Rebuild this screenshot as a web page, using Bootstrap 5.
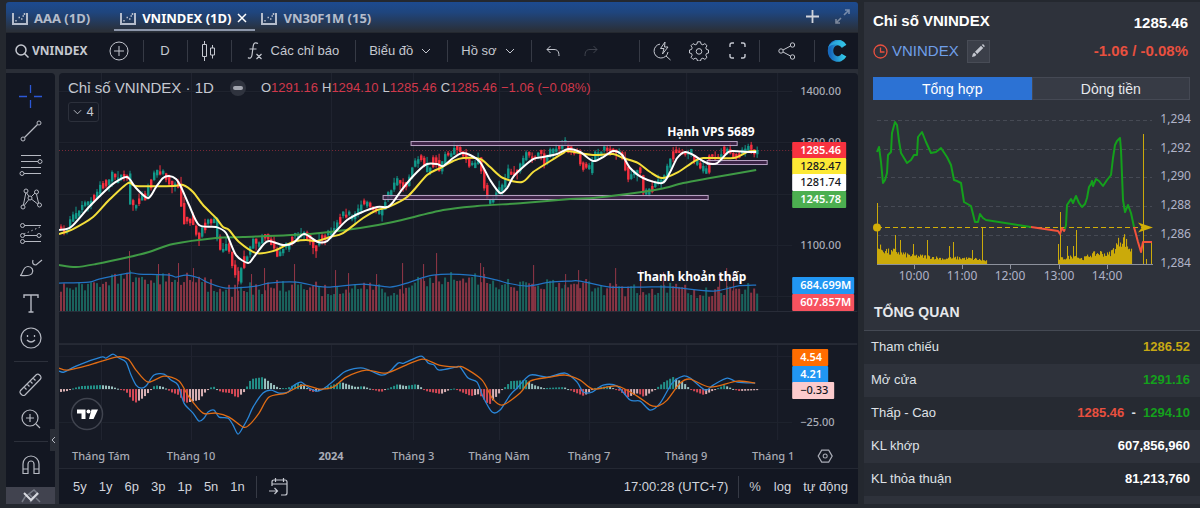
<!DOCTYPE html>
<html lang="vi" data-bs-theme="dark">
<head>
<meta charset="utf-8">
<meta name="viewport" content="width=device-width, initial-scale=1">
<title>VNINDEX (1D)</title>
<link href="https://cdn.jsdelivr.net/npm/bootstrap@5.3.0/dist/css/bootstrap.min.css" rel="stylesheet">
<style>
  body { background: #24282f; color: #d1d4dc; font-family: "Liberation Sans", Arial, sans-serif; font-size: 13px; line-height: 18px; }
  button { font: inherit; color: inherit; background: none; border: 0; padding: 0; }
  a { color: inherit; text-decoration: none; }
  svg.ico { fill: none; stroke: currentColor; stroke-width: 1; flex: none; display: block; }
  .humanist { font-family: "Noto Sans", "Open Sans", sans-serif; }
  .workspace { min-width: 0; padding-left: 6px; }
  .tabbar { height: 30px; margin-top: 2px; background: linear-gradient(#1d4b90, #1f457d 35%, #2a303a 95%); border-radius: 3px 3px 0 0; }
  .doc-tab { height: 29px; color: #b4bccb; font-weight: 700; font-size: 13px; gap: 6px; padding: 5px 8px 0 6px; border-bottom: 2px solid transparent; }
  .doc-tab.active { color: #fff; border-color: #8d97ab; }
  .doc-tab.active svg:first-child { color: #b4bccb; }
  .toolbar { height: 36px; background: #131722; margin-top: 1px; }
  .tool-cell { height: 22px; color: #c5c8d0; }
  .menu-cell { gap: 8px; padding: 0 16px 0 13px; }
  .symbol-cell { font-size: 12px; font-weight: 700; gap: 3px; padding: 0 11px 0 9px; }
  .ruled { border-left: 1px solid #363a45; }
  .w-44 { width: 44px; } .w-36 { width: 36px; } .w-32 { width: 32px; }
  .frame { background: #2a2e37; min-height: 0; margin-bottom: 4px; }
  .sidebar { width: 49px; background: #131722; border-radius: 0 4px 0 0; color: #b6b9c2; padding-top: 7px; }
  .sidebar button { height: 34px; width: 100%; }
  .sidebar .tall button { height: 35px; }
  .sidebar hr { width: 34px; margin: 5px auto 6px; border-color: #787b86; }
  .more { left: 0; right: 0; bottom: 0; background: #41434f; height: 17px !important; color: #d8dae0; }
  .collapse-tab { right: -1px; bottom: 53px; width: 6px !important; height: 22px !important; background: #2a2e37; }
  .chart-panel { background: #161a25; border-radius: 4px 4px 0 0; min-width: 0; }
  .legend { left: 9px; top: 5px; color: #c5c8d0; line-height: 20px; }
  .legend-row { height: 20px; }
  .ohlc { gap: 4px; }
  .symbol-name { font-size: 15px; }
  .down { color: #d0384b; }
  .hide-dot { width: 16px; height: 16px; border-radius: 50%; background: #2f333e; margin: 0 15px 0 16px; }
  .hide-dot::after { content: ""; width: 10px; height: 4px; border-radius: 2px; background: #a3a6af; }
  .count-btn { height: 20px; width: 31px; border: 1px solid #2c303b; border-radius: 3px; margin-top: 4px; }
  .range-bar { height: 36px; border-top: 1px solid #242833; background: #131722; padding: 0 10px 0 14px; }
  .ranges { gap: 12px; }
  .side-panel { width: 28%; background: #2e323b; margin: 2px 0 4px 6px; }
  .quote { font-size: 15px; padding: 9px 12px 0 9px; color: #fff; }
  .quote-row { height: 20px; }
  .quote-row.tight { height: 24px; margin-top: 8px; }
  .ticker { color: #6f9fe8; }
  .neg { color: #e8503f; }
  .edit-btn { width: 23px; height: 23px; background: #3b3f49; border: 1px solid #484c56; color: #c5c8d0; }
  .switch { padding: 14px 10px 0 9px; font-size: 14px; color: #e6e8ec; }
  .switch button { height: 23px; background: #373b45; border: 1px solid #454954; }
  .switch .active { background: #2c72d4; border-color: #2c72d4; color: #fff; }
  .overview h2 { font-size: 14px; font-weight: 700; color: #e6e8ec; margin: 0; padding: 14px 10px 9px; line-height: 18px; border-bottom: 1px solid #444953; }
  .overview table { font-size: 13px; line-height: 18px; color: #dfe1e6; }
  .overview th { font-weight: 400; height: 33px; padding: 0 7px 1px; }
  .overview td { font-weight: 700; text-align: right; padding: 0 10px 1px; }
  .overview tr:nth-child(odd) { background: #262a32; }
  .ref { color: #c7a814; } .pos { color: #14a01c; }
  .plot text { font-family: "Noto Sans", "Open Sans", sans-serif; font-size: 11px; fill: #a9acb6; font-weight: 500; }
  .plot .note { font-size: 12px; font-weight: 700; fill: #fff; }
  .plot .on { fill: #fff; font-weight: 600; }
  .plot .ink { fill: #131722; }
  .intraday text { font-family: "Noto Sans", "Open Sans", sans-serif; font-size: 12px; fill: #b0b3c8; }
</style>
</head>
<body class="vh-100 overflow-hidden">
<svg class="d-none">
  <symbol id="i-doc" viewBox="0 0 16 13"><path d="M1 1v11h14V1" stroke-width="2"/><path d="M4 9.500V8M6.500 5.500h1.500M9 7h1.500M10.500 4H12M12.500 1v2" stroke-width="1.500"/></symbol>
  <symbol id="i-chev" viewBox="0 0 10 6"><path d="M1 1l4 4 4-4"/></symbol>
</svg>
<div class="d-flex h-100">
  <main class="workspace d-flex flex-column flex-grow-1">
    <nav class="tabbar d-flex humanist">
      <button class="doc-tab d-flex align-items-center me-3"><svg class="ico" width="16" height="13"><use href="#i-doc"/></svg>AAA (1D)</button>
      <button class="doc-tab active d-flex align-items-center"><svg class="ico" width="16" height="13"><use href="#i-doc"/></svg>VNINDEX (1D)
        <svg class="ico" width="10" height="10" viewBox="0 0 10 10"><path d="M1 1l8 8M9 1L1 9" stroke-width="1.500"/></svg></button>
      <button class="doc-tab d-flex align-items-center"><svg class="ico" width="16" height="13"><use href="#i-doc"/></svg>VN30F1M (15)</button>
      <button class="ms-auto px-3" aria-label="Thêm"><svg class="ico" width="13" height="13" viewBox="0 0 13 13"><path d="M6.500 0v13M0 6.500h13" stroke-width="1.800"/></svg></button>
      <button class="pe-2" aria-label="Mở rộng"><svg class="ico opacity-50" width="15" height="15" viewBox="0 0 15 15"><path d="M9 6l5-5M10 1h4v4M6 9l-5 5M1 10v4h4" stroke-width="1.600"/></svg></button>
    </nav>

    <div class="toolbar d-flex align-items-center">
      <button class="tool-cell symbol-cell d-flex align-items-center humanist">
        <svg class="ico" width="14" height="14" viewBox="0 0 14 14"><circle cx="6" cy="6" r="5" stroke-width="1.500"/><path d="M9.500 9.500l4 4" stroke-width="1.500"/></svg>VNINDEX</button>
      <button class="tool-cell w-44 pe-1 d-flex align-items-center justify-content-center" aria-label="So sánh"><svg class="ico" width="20" height="20" viewBox="0 0 20 20"><circle cx="10" cy="10" r="9"/><path d="M10 5v10M5 10h10"/></svg></button>
      <button class="tool-cell ruled w-44">D</button>
      <button class="tool-cell ruled w-44 d-flex align-items-center justify-content-center" aria-label="Nến"><svg class="ico" width="16" height="20" viewBox="0 0 16 20"><path d="M1.500 3.500h4v12h-4zM3.500 0v3.500M3.500 15.500V20M9.500 7h4v7h-4zM11.500 4v3M11.500 14v3.500"/></svg></button>
      <button class="tool-cell ruled d-flex align-items-center" style="gap:7px;padding:0 16px 0 15px">
        <svg class="ico" width="17" height="20" viewBox="0 0 17 20"><path d="M11 2.500C8.500 1 6.500 2 6.200 5L5 14c-.3 3-2.500 4-4 2.500M2.500 8h7M9.500 13l5 5M14.500 13l-5 5" stroke-width="1.200"/></svg>Các chỉ báo</button>
      <button class="tool-cell menu-cell ruled d-flex align-items-center">Biểu đồ<svg class="ico" width="10" height="6"><use href="#i-chev"/></svg></button>
      <button class="tool-cell menu-cell ruled d-flex align-items-center">Hồ sơ<svg class="ico" width="10" height="6"><use href="#i-chev"/></svg></button>
      <button class="tool-cell ruled w-44 d-flex align-items-center justify-content-center" aria-label="Hoàn tác"><svg class="ico" width="14" height="12" viewBox="0 0 14 12"><path d="M4.500 1L1 4.500 4.500 8M1 4.500h7c3.500 0 5 2 5 6.500"/></svg></button>
      <button class="tool-cell w-32 opacity-25 d-flex align-items-center justify-content-center" aria-label="Làm lại"><svg class="ico" width="14" height="12" viewBox="0 0 14 12"><path d="M9.500 1L13 4.500 9.500 8M13 4.500H6C2.500 4.500 1 6.500 1 11"/></svg></button>
      <button class="tool-cell ruled w-44 ms-auto d-flex align-items-center justify-content-center" aria-label="Tìm nhanh"><svg class="ico" width="20" height="20" viewBox="0 0 20 20"><path d="M8 3.100A7 7 0 1 0 16 11M14 15l4.500 4"/><path d="M13 1L8.500 7.500H12L10.500 13 16 6h-3.500z"/></svg></button>
      <button class="tool-cell w-32 d-flex align-items-center justify-content-center" aria-label="Cài đặt"><svg class="ico" width="20" height="20" viewBox="0 0 20 20"><path d="M8.500.8h3l.6 2.300 1.700.7 2.100-1.200 2.100 2.100-1.200 2.100.7 1.700 2 .5v3l-2 .5-.7 1.700 1.200 2.100-2.100 2.100-2.100-1.200-1.700.7-.6 2.100h-3l-.6-2.100-1.700-.7-2.100 1.200L2 16.300l1.200-2.100-.7-1.700L.5 12V9l2-.5.7-1.700L2 4.700l2.100-2.100 2.100 1.200 1.700-.7z"/><circle cx="10" cy="10.400" r="2.800"/></svg></button>
      <button class="tool-cell w-44 d-flex align-items-center justify-content-center" aria-label="Toàn màn hình"><svg class="ico" width="17" height="17" viewBox="0 0 17 17"><path d="M1 5V3q0-2 2-2h2M12 1h2q2 0 2 2v2M16 12v2q0 2-2 2h-2M5 16H3q-2 0-2-2v-2" stroke-width="1.400"/></svg></button>
      <button class="tool-cell ruled d-flex align-items-center justify-content-center" style="width:55px" aria-label="Chia sẻ"><svg class="ico" width="18" height="18" viewBox="0 0 18 18"><circle cx="3" cy="9" r="2.200"/><circle cx="14.500" cy="3" r="2.200"/><circle cx="14.500" cy="15" r="2.200"/><path d="M5 8l7.500-4M5 10l7.500 4"/></svg></button>
      <a href="#" class="tool-cell ruled w-44 d-flex align-items-center justify-content-center" aria-label="Trang chủ"><svg width="20" height="22" viewBox="0 0 20 22"><defs><linearGradient id="cg" x2="1" y2="0"><stop stop-color="#1769bd"/><stop offset="1" stop-color="#31c6e8"/></linearGradient></defs><path d="M17 6.500C13-.5 3.500 3 3.500 11S13 22.500 17 15.500" fill="none" stroke="url(#cg)" stroke-width="5.500" transform="translate(0 -.3)"/><path d="M1 8C3 1 14-2 19 5l-4 3C12 4 5 3 1 8z" fill="#36bfe6" opacity=".6"/></svg></a>
    </div>

    <div class="frame d-flex flex-grow-1 pt-1">
      <aside class="sidebar position-relative me-1 flex-shrink-0">
        <button class="d-flex align-items-center justify-content-center" style="color:#2c58d6" aria-label="Con trỏ"><svg class="ico" width="23" height="23" viewBox="0 0 23 23"><path d="M11.500 0v8M11.500 15v8M0 11.500h8M15 11.500h8" stroke-width="1.300"/></svg></button>
        <button class="d-flex align-items-center justify-content-center" aria-label="Đường xu hướng"><svg class="ico" width="22" height="22" viewBox="0 0 22 22"><circle cx="3" cy="19" r="2"/><circle cx="19" cy="3" r="2"/><path d="M4.500 17.500l13-13" stroke-width="1.200"/></svg></button>
        <button class="d-flex align-items-center justify-content-center" aria-label="Fibonacci"><svg class="ico" width="24" height="22" viewBox="0 0 24 22"><path d="M2 1.500h20M2 7.500h18M2 13.500h20M4 19.500h18" stroke-width="1.200"/><circle cx="21" cy="7.500" r="2" fill="#131722"/><circle cx="3" cy="19.500" r="2" fill="#131722"/></svg></button>
        <button class="d-flex align-items-center justify-content-center" aria-label="Mẫu hình"><svg class="ico" width="22" height="22" viewBox="0 0 22 22"><path d="M3 19L6 4l4 6 6-6 3 13-9-7z"/><g fill="#131722"><circle cx="3" cy="19" r="2"/><circle cx="6" cy="3" r="2"/><circle cx="10" cy="10" r="2"/><circle cx="16.500" cy="4" r="2"/><circle cx="19.500" cy="17" r="2"/></g></svg></button>
        <div class="tall">
        <button class="d-flex align-items-center justify-content-center" aria-label="Dự báo"><svg class="ico" width="22" height="22" viewBox="0 0 22 22"><path d="M4 3.500h17M4 13.500h13M4 19.500h17" stroke-width="1.200"/><path d="M4 12L20 5" stroke-dasharray="1.500 2.500"/><g fill="#131722"><circle cx="2.500" cy="3.500" r="2"/><circle cx="2.500" cy="13.500" r="2"/><circle cx="2.500" cy="19.500" r="2"/><circle cx="19" cy="13.500" r="2"/></g></svg></button>
        <button class="d-flex align-items-center justify-content-center" aria-label="Cọ vẽ"><svg class="ico" width="24" height="18" viewBox="0 0 24 18"><path d="M1 16.500c3 0 2-9 8-9 4 0 6 4 4 7s-8 2-12 2zM14 1c-1 3 0 5 3 5l6-5" stroke-width="1.200"/></svg></button>
        <button class="d-flex align-items-center justify-content-center" aria-label="Văn bản"><svg class="ico" width="16" height="19" viewBox="0 0 16 19"><path d="M1 4V1h14v3M8 1v17M5.500 18h5" stroke-width="1.400"/></svg></button>
        <button class="d-flex align-items-center justify-content-center" aria-label="Biểu tượng"><svg class="ico" width="22" height="22" viewBox="0 0 22 22"><circle cx="11" cy="11" r="10" stroke-width="1.200"/><path d="M7 13q4 4 8 0M7.500 8v2M14.500 8v2" stroke-width="1.300"/></svg></button>
        </div>
        <hr>
        <button class="d-flex align-items-center justify-content-center" aria-label="Thước đo"><svg class="ico" width="24" height="24" viewBox="0 0 24 24"><path d="M1.500 17.500L17.500 1.500q1.500-1 3 .5l1 1q1 1.500 0 3L6 22q-1.500 1-3 0l-1.500-1.500q-1-1.500 0-3zM5 14l2.500 2.500M8 11l2.500 2.500M11 8l2.500 2.500M14 5l2.500 2.500" stroke-width="1.200"/></svg></button>
        <button class="d-flex align-items-center justify-content-center" aria-label="Phóng to"><svg class="ico" width="20" height="20" viewBox="0 0 20 20"><circle cx="9" cy="9" r="8" stroke-width="1.200"/><path d="M9 5v8M5 9h8M15 15l4 4" stroke-width="1.200"/></svg></button>
        <hr>
        <button class="d-flex align-items-center justify-content-center" aria-label="Nam châm"><svg class="ico" width="18" height="20" viewBox="0 0 18 20"><path d="M1 18.500V9a8 8 0 0 1 16 0v9.500h-5V9a3 3 0 0 0-6 0v9.500zM1 14h5M12 14h5" stroke-width="1.200"/></svg></button>
        <button class="more position-absolute d-flex align-items-center justify-content-center" aria-label="Xem thêm"><svg class="ico" width="20" height="15" viewBox="0 0 20 15"><path d="M1 14l3-5 9-7 4 4-8 8M8 6l4 4M15 10l4 4" stroke="#777b86" stroke-width="1.500"/><path d="M3 5l7 7 7-7" stroke-width="2"/></svg></button>
        <button class="collapse-tab position-absolute" aria-label="Thu gọn"><svg class="ico" width="6" height="8" viewBox="0 0 6 8"><path d="M5 1L2 4l3 3"/></svg></button>
      </aside>

      <section class="chart-panel position-relative flex-grow-1 d-flex flex-column">
        <div class="legend position-absolute">
          <div class="legend-row d-flex align-items-center">
            <span class="symbol-name">Chỉ số VNINDEX · 1D</span>
            <button class="hide-dot d-flex align-items-center justify-content-center" aria-label="Ẩn"></button>
            <div class="ohlc d-flex">
              <span>O<span class="down">1291.16</span></span>
              <span>H<span class="down">1294.10</span></span>
              <span>L<span class="down">1285.46</span></span>
              <span>C<span class="down">1285.46</span></span>
              <span class="down">−1.06 (−0.08%)</span>
            </div>
          </div>
          <button class="count-btn d-flex align-items-center justify-content-center gap-1"><svg class="ico" width="9" height="6"><use href="#i-chev"/></svg>4</button>
        </div>
        <div class="flex-grow-1" style="min-height:0">
          <svg class="plot d-block w-100 h-100" id="plot" viewBox="59 73 798 395" preserveAspectRatio="xMinYMin meet"></svg>
        </div>
        <div class="range-bar d-flex align-items-center">
          <div class="ranges d-flex">
            <button>5y</button><button>1y</button><button>6p</button><button>3p</button><button>1p</button><button>5n</button><button>1n</button>
          </div>
          <button class="ruled tool-cell ps-2 d-flex align-items-center" style="margin-left:11px" aria-label="Đến ngày"><svg class="ico ms-1" width="20" height="20" viewBox="0 0 20 20"><path d="M3 9V5q0-2 2-2h11q2 0 2 2v11q0 2-2 2h-4M3 7h15M6.500 1v4M14.500 1v4M0 14h8M5.500 11l3 3-3 3" stroke-width="1.200"/></svg></button>
          <button class="ms-auto">17:00:28 (UTC+7)</button>
          <button class="ruled tool-cell" style="margin-left:10px;padding-left:10px">%</button>
          <button style="margin-left:13px">log</button>
          <button style="margin-left:12px">tự động</button>
        </div>
      </section>
    </div>
  </main>

  <aside class="side-panel d-flex flex-column overflow-hidden flex-shrink-0">
    <div class="quote">
      <div class="quote-row d-flex justify-content-between fw-bold align-items-center"><span>Chỉ số VNINDEX</span><span class="pt-1">1285.46</span></div>
      <div class="quote-row tight d-flex align-items-center">
        <svg class="ico neg me-1" width="15" height="15" viewBox="0 0 15 15"><circle cx="7.500" cy="7.500" r="6.500" stroke-width="1.300"/><path d="M7.500 3.500V8h4" stroke-width="1.300"/></svg>
        <a href="#" class="ticker">VNINDEX</a>
        <button class="edit-btn ms-2 d-flex align-items-center justify-content-center" aria-label="Sửa"><svg width="14" height="14" viewBox="0 0 14 14" fill="currentColor"><path d="M1 13l.8-3 1.400-1.400 2.200 2.200L4 12.200zM4 7.800L10 1.800l2.200 2.200-6 6zM10.800 1l.6-.6q.6-.3 1.200.2l.8.8q.5.600.2 1.200l-.6.6z"/></svg></button>
        <span class="neg fw-bold ms-auto">-1.06 / -0.08%</span>
      </div>
    </div>
    <div class="switch d-flex"><button class="active w-50">Tổng hợp</button><button class="w-50">Dòng tiền</button></div>
    <svg class="intraday d-block w-100 flex-shrink-0" id="intraday" viewBox="864 100 336 189"></svg>
    <section class="overview">
      <h2>TỔNG QUAN</h2>
      <table class="w-100">
        <tr><th scope="row">Tham chiếu</th><td class="ref">1286.52</td></tr>
        <tr><th scope="row">Mở cửa</th><td class="pos">1291.16</td></tr>
        <tr><th scope="row">Thấp - Cao</th><td><span class="neg">1285.46</span> &nbsp;-&nbsp; <span class="pos">1294.10</span></td></tr>
        <tr><th scope="row">KL khớp</th><td class="text-white">607,856,960</td></tr>
        <tr><th scope="row">KL thỏa thuận</th><td class="text-white">81,213,760</td></tr>
        <tr><th scope="row">Tổng KL</th><td></td></tr>
      </table>
    </section>
  </aside>
</div>
<script src="https://cdn.jsdelivr.net/npm/bootstrap@5.3.0/dist/js/bootstrap.bundle.min.js"></script>
<script>
  let seed = 7;
  const rnd = () => (seed = (seed * 16807) % 2147483647) / 2147483647;
  const pts = s => s.trim().split(/\s+/).map(p => p.split(',').map(Number));
  const at = (a, x) => {
    for (let i = 1; i < a.length; i++) if (x <= a[i][0]) {
      const [x0, y0] = a[i - 1], [x1, y1] = a[i];
      return y0 + (y1 - y0) * Math.max(0, x - x0) / (x1 - x0);
    }
    return a[a.length - 1][1];
  };
  // Catmull-Rom curve through the points
  const curve = a => a.map((p, i) => {
    if (!i) return `M${p}`;
    const q = a[i - 1], o = a[i - 2] || q, n = a[i + 1] || p, k = 7;
    return `C${q[0] + (p[0] - o[0]) / k} ${q[1] + (p[1] - o[1]) / k} ${p[0] - (n[0] - q[0]) / k} ${p[1] - (n[1] - q[1]) / k} ${p}`;
  }).join('');
  const line = (d, c, w) => `<path d="${d}" fill="none" stroke="${c}" stroke-width="${w}" stroke-linejoin="round"/>`;
  const box = (x, y, w, h, f, extra = '') => `<rect x="${x}" y="${y}" width="${w}" height="${h}" fill="${f}" ${extra}/>`;
  const text = (x, y, t, extra = '') => `<text x="${x}" y="${y}" ${extra}>${t}</text>`;

  const close = pts(`59,228 65,230 71,218 80,207 88,203 95,194 101,180 106,187 112,172 116,180 126,174 128,183 129,203 133,207 139,200 144,192 149,180 155,169 163,172 168,182 173,188 177,182 180,203 183,222 189,217 194,230 198,237 203,225 213,218 216,237 220,252 226,243 231,263 238,283 241,260 248,253 251,240 256,245 263,233 269,240 276,253 286,245 291,237 303,232 312,248 320,238 333,227 340,215 347,213 350,218 362,202 368,207 378,212 388,193 397,178 403,187 412,165 420,158 427,173 433,157 438,172 445,153 448,158 455,147 463,155 469,167 478,157 482,183 487,202 492,198 502,183 507,170 515,173 525,153 533,157 540,153 543,163 550,150 562,145 565,142 568,153 577,153 580,165 588,170 593,155 605,147 620,153 627,178 638,168 643,195 652,183 662,177 667,162 673,150 687,152 697,163 705,172 708,157 717,158 723,147 735,157 747,147 753,153 757,150`);
  const fast = pts(`59,230 71,227 89,207 106,190 114,183 127,177 136,188 148,198 156,187 163,178 169,176 176,179 181,187 189,205 199,225 216,227 226,233 236,255 248,263 253,258 263,245 269,241 283,245 293,243 304,234 318,242 327,241 337,230 347,220 360,213 377,207 387,207 393,202 403,188 417,172 427,164 437,164 443,166 453,158 462,153 470,155 480,162 490,180 500,193 507,188 513,177 523,167 533,159 543,157 557,154 568,149 580,152 593,161 603,157 613,151 622,155 630,168 643,178 662,183 670,172 677,158 685,152 693,155 707,163 717,163 727,153 732,151 750,152 756,152`);
  const slow = pts(`59,234 73,229 93,217 109,200 128,183 136,186 173,186 183,185 193,192 203,205 216,218 223,227 229,230 239,242 256,253 273,251 286,245 296,241 306,240 317,241 330,237 343,233 363,218 377,210 388,207 407,197 427,175 440,168 453,161 463,158 480,159 490,167 503,178 522,182 533,172 547,163 563,153 568,151 593,155 613,154 623,158 638,163 650,172 662,178 678,172 693,162 703,158 733,158 747,152 756,151`);
  const trend = pts(`59,265 76,267 96,264 129,257 149,252 173,244 216,238 243,237 310,234 360,228 393,222 443,210 477,206 523,203 570,199 593,198 627,194 660,189 683,183 710,178 756,170`);
  const volMa = pts(`59,283 89,282 99,279 129,273 139,274 169,275 176,277 186,275 199,278 209,283 226,288 256,286 269,283 296,282 316,286 330,287 363,284 390,287 410,282 433,275 470,275 497,280 507,283 527,286 550,282 570,281 580,281 610,287 643,287 670,287 713,291 737,286 756,285`);
  const spikes = [[129, 251], [158, 264], [178, 263], [193, 268], [237, 268], [251, 274], [264, 268], [294, 264], [335, 270], [348, 273], [376, 274], [402, 263], [423, 264], [436, 253], [480, 263], [483, 267], [533, 265], [565, 274], [578, 270], [615, 268], [640, 270], [663, 272], [719, 272], [726, 268], [733, 272]];
  const macd = pts(`59,371 64,372 76,366 101,357 106,358 113,354 119,358 126,362 131,375 136,385 141,388 146,386 154,375 164,374 171,380 178,385 184,403 193,413 199,421 204,418 208,412 214,410 219,417 228,418 233,425 238,434 243,427 248,418 253,407 263,393 271,390 279,393 288,392 293,386 301,382 309,388 318,391 326,387 338,377 346,371 363,368 381,375 389,372 398,363 404,363 421,356 428,363 434,365 439,370 456,367 460,367 468,378 477,382 483,397 492,412 500,410 510,395 517,388 530,375 547,377 565,373 577,382 583,392 592,392 603,385 617,386 630,400 640,401 650,410 660,403 672,383 683,376 690,378 705,390 713,385 727,378 737,382 755,383`);
  const signal = pts(`59,368 68,370 89,365 116,357 128,359 136,370 148,382 164,376 179,381 189,397 203,413 216,413 229,417 243,427 249,425 259,413 269,397 286,393 303,385 319,389 333,387 346,377 366,370 386,373 406,365 423,359 439,365 456,367 463,367 482,380 492,398 502,405 520,393 530,381 550,377 565,375 580,380 593,389 617,386 637,396 650,405 658,406 667,400 680,383 690,379 710,387 737,381 755,383`);
  const hist = pts(`59,-3 66,-2 73,1 80,3 100,4 110,3 115,1 125,-2 128,-7 134,-14 142,-9 148,-3 154,4 163,2 170,-3 178,-6 184,-14 198,-11 206,-1 212,3 220,-3 230,-4 236,-9 243,-3 250,10 262,12 270,6 278,1 286,1 297,6 304,3 310,-3 318,-2 325,2 340,7 355,2 362,3 370,0 380,-3 388,1 397,5 404,3 416,5 425,-2 440,-5 452,1 456,-1 470,-7 478,-5 488,-16 500,-2 510,8 525,9 533,4 543,1 563,2 573,-3 583,-7 593,1 607,3 617,-1 627,-8 637,-4 643,-8 653,-1 663,7 672,12 683,6 690,-1 703,-6 713,-1 723,4 737,-2 757,-1`);

  let g = '';
  for (const x of [101, 191, 331, 413, 499, 589, 686, 777]) g += box(x, 73, 1, 238, '#212531') + box(x, 344, 1, 96, '#212531');
  for (const y of [91, 142, 194, 245, 296, 356, 389, 422]) g += box(59, y, 733, 1, '#1f232e');
  g += box(59, 311, 798, 1, '#2a2e39') + box(59, 343, 798, 2, '#262a35');
  g += line('M59 150.500H792', '#7c2a38', '1" stroke-dasharray="1 2');
  const N = 232, step = 3;
  for (let i = 0; i <= N; i++) {
    const x = 60 + i * step;
    const up = at(close, x + 1) < at(close, x - 2) ? rnd() > .25 : rnd() > .85;
    const top = Math.min(309, at(volMa, x) + (rnd() - .3) * 14);
    g += box(x, top, 2, 311 - top, up ? '#1b6b64' : '#943747', 'opacity=".9"');
    const shift = (rnd() - .5) * 5;
    const c = at(close, x) + shift, o = at(close, x - 3) + shift;
    const hi = Math.min(c, o) - .5, lo = Math.max(c, o) + 1.5, wick = rnd() > .6 ? 7 : 3;
    const col = up ? '#12988a' : '#f7303f';
    g += box(x + .5, hi - wick * rnd(), 1, lo - hi + wick, col) + box(x, hi, 2.4, lo - hi, col);
    const h = at(hist, x), pv = at(hist, x - 3);
    const hc = h >= 0 ? (h >= pv ? '#26a69a' : '#b2dfdb') : (h <= pv ? '#f7525f' : '#fccbcd');
    g += box(x, h >= 0 ? 389 - h : 389, 2, Math.max(1, Math.abs(h)), hc, 'opacity=".85"');
  }
  for (const [x, y] of spikes) g += box(x, y, 1, 311 - y, '#943747');
  g += line(curve(volMa), '#2274c4', 1.2);
  for (const [x, y, w] of [[411, 141.5, 326], [383, 195.5, 325], [707, 160.5, 60]]) g += box(x, y, w, 4, '#46274f', 'fill-opacity=".8" stroke="#b9a3c4"');
  g += line(curve(trend), '#3f9a45', 2) + line(curve(slow), '#f5df3a', 2) + line(curve(fast), '#fff', 2);
  g += line(curve(macd), '#2a86d8', 1.3) + line(curve(signal), '#e06c14', 1.3);
  g += text(667, 136, 'Hạnh VPS 5689', 'class="note"') + text(637, 281, 'Thanh khoản thấp', 'class="note"');
  for (const [y, t] of [[95, '1400.00'], [146, '1300.00'], [249, '1100.00'], [426, '−25.00']]) g += text(800, y, t);
  const tags = [[142, 54, '#f7323f', '1285.46', 'on'], [158, 54, '#fde935', '1282.47', 'ink'], [174, 54, '#fff', '1281.74', 'ink'], [191, 54, '#4caf50', '1245.78', 'on'],
    [277, 62, '#2196f3', '684.699M', 'on'], [294, 62, '#f7525f', '607.857M', 'on'], [349, 36, '#ff6d00', '4.54', 'on'], [366, 36, '#2196f3', '4.21', 'on'], [382, 42, '#fccbcd', '−0.33', 'ink']];
  for (const [y, w, f, t, c] of tags) g += box(792, y, w, 17, f, 'rx="1"') + text(800, y + 12, t, `class="${c}"`);
  for (const [x, t] of [[101, 'Tháng Tám'], [191, 'Tháng 10'], [331, '2024'], [413, 'Tháng 3'], [499, 'Tháng Năm'], [589, 'Tháng 7'], [686, 'Tháng 9'], [773, 'Tháng 1']])
    g += text(x, 460, t, 'text-anchor="middle"' + (t === '2024' ? ' style="font-weight:700"' : ''));
  g += '<path d="M821.500 450h7l3.500 6-3.500 6h-7l-3.500-6z" fill="none" stroke="#a9acb6" stroke-width="1.200"/><circle cx="825" cy="456" r="2" fill="none" stroke="#a9acb6"/>';
  g += '<circle cx="87" cy="414" r="15.500" fill="#171b26" stroke="#40444f" stroke-width="1.500"/><path d="M77 409.500h8.500V419h-4v-5.500H77zM91.500 409.500H98L93.500 419h-4.500z" fill="#fff"/><circle cx="88.500" cy="411.500" r="2" fill="#fff"/>';
  document.getElementById('plot').innerHTML = g;

  // Intraday price and volume
  let d = '';
  [1294, 1292, 1290, 1288, 1286, 1284].forEach((v, i) => {
    const y = Math.round(120 + i * 28.7);
    if (i < 5) d += line(`M877 ${y}.500H1152`, '#464a54', '1" stroke-dasharray="4 3');
    d += text(1191, y + 3, v.toLocaleString('en-US'), 'text-anchor="end"');
  });
  const vol = pts(`877,16 884,14 890,11 895,13 905,9 914,8 930,7 945,5 955,6 975,5 986,3`);
  const vol2 = pts(`1058,5 1066,6 1074,8 1082,5 1090,9 1100,11 1108,9 1114,15 1120,24 1124,25 1127,18 1131,13`);
  const bars = (a, x0, x1) => { for (let x = x0; x < x1; x++) { const h = at(a, x) * (.7 + rnd() * .6); d += box(x, 264 - h, 1.1, h, '#cbaa0a'); } };
  bars(vol, 877, 987); bars(vol2, 1058, 1132);
  for (const [x, y] of [[877, 203], [895, 235], [900, 240], [913, 244], [927, 240], [949, 246], [953, 242], [972, 250], [982, 227], [1058, 244], [1060, 212], [1067, 246], [1073, 246], [1076, 230], [1143, 134], [1146, 259], [1151, 243]])
    d += box(x, y, 1, 264 - y, '#cbaa0a');
  d += line('M877 264.500H1153', '#8d919c', 1);
  for (const [x, t] of [[914, '10:00'], [962, '11:00'], [1010, '12:00'], [1059, '13:00'], [1107, '14:00']]) d += box(x, 264, 1, 5, '#8d919c') + text(x, 280, t, 'text-anchor="middle"');
  d += line('M877 227.500H1145', '#d2ae08', '1.2" stroke-dasharray="5 3') + '<circle cx="877" cy="227.500" r="4" fill="#d2ae08"/><path d="M1138 222.500l15 5-15 5 4-5z" fill="#d2ae08"/>';
  const up1 = `877,152 879,147 881,162 883,183 885,180 887,173 888,155 891,152 892,133 895,122 897,125 899,141 901,153 904,158 907,163 911,160 914,155 917,155 918,137 922,132 926,142 931,153 936,152 941,148 945,154 947,157 951,165 954,180 957,181 961,183 964,202 971,206 975,222 978,222 980,214 983,218 986,220 1031,227`;
  const up2 = `1065,229 1066,225 1067,205 1071,199 1073,203 1076,196 1079,203 1082,207 1085,204 1087,198 1089,187 1091,184 1092,181 1093,186 1096,179 1099,181 1103,186 1107,180 1111,175 1113,158 1115,145 1117,141 1120,138 1121,150 1123,200 1125,212 1128,205 1131,213 1134,227`;
  for (const [s, c] of [[up1, '#14a01c'], ['1031,227 1058,231 1060,234 1062,228 1064,231 1065,229', '#f4533c'], [up2, '#14a01c'], ['1134,227 1138,242 1141,252 1143,242 1152,242', '#f4533c']])
    d += line('M' + s.replace(/\s+/g, 'L'), c, 2);
  document.getElementById('intraday').innerHTML = d;
</script>
</body>
</html>
